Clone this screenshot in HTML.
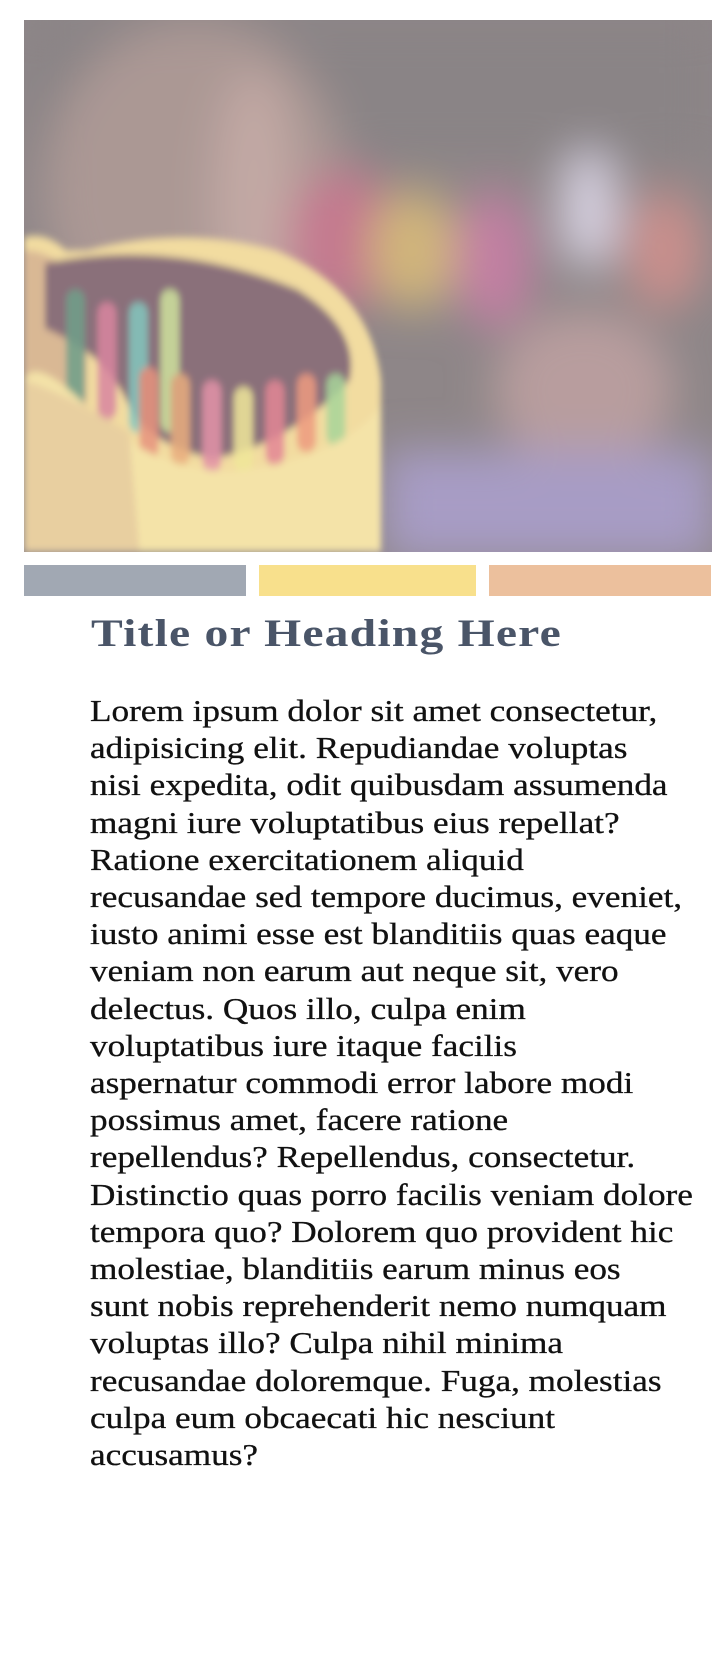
<!DOCTYPE html>
<html><head><meta charset="utf-8"><style>
html,body{margin:0;padding:0;background:#fff;width:726px;height:1668px;overflow:hidden}
.img{position:absolute;left:24px;top:20px;width:688px;height:532px;overflow:hidden}
.bar{position:absolute;top:565px;height:31px}
h1{position:absolute;left:91px;top:611px;margin:0;font:bold 39px/1.2 "Liberation Serif",serif;color:#4a5568;letter-spacing:1px;white-space:nowrap;transform:scaleX(1.22);transform-origin:0 0}
.p{position:absolute;left:90px;top:692px;margin:0;font:31px/37.2px "Liberation Serif",serif;color:#111;white-space:nowrap;transform:scaleX(1.135);transform-origin:0 0;-webkit-text-stroke:0.3px #111}
</style></head><body>
<div class="img"><svg width="688" height="532" viewBox="0 0 688 532">
<defs><filter id="b" x="-20%" y="-20%" width="140%" height="140%"><feGaussianBlur stdDeviation="22"/></filter>
<filter id="s"><feGaussianBlur stdDeviation="3"/></filter></defs>
<rect width="688" height="532" fill="#8e8688"/>
<g filter="url(#b)">
<rect x="0" y="0" width="688" height="140" fill="#8a8486"/>
<ellipse cx="170" cy="170" rx="150" ry="170" fill="#ab9894"/>
<ellipse cx="230" cy="180" rx="40" ry="130" fill="#c2a9a4"/>
<ellipse cx="320" cy="220" rx="55" ry="70" fill="#c4788f"/>
<ellipse cx="390" cy="230" rx="45" ry="60" fill="#d0b57a"/>
<ellipse cx="470" cy="240" rx="40" ry="70" fill="#c27fa3"/>
<ellipse cx="565" cy="190" rx="30" ry="60" fill="#d6d0e0"/>
<ellipse cx="640" cy="230" rx="40" ry="60" fill="#c98f8c"/>
<ellipse cx="560" cy="370" rx="90" ry="80" fill="#b89d9e"/>
<rect x="360" y="430" width="330" height="110" fill="#a79cc5"/>
</g>
<g filter="url(#s)" transform="translate(0,532) scale(1.05,1.3) translate(0,-532)">
<path d="M0 290 Q20 285 40 300 L60 300 Q150 280 240 300 Q330 330 340 400 L340 532 L0 532 Z" fill="#f2dca0"/>
<path d="M0 300 Q30 300 60 330 L60 532 L0 532Z" fill="#d9b894"/>
<path d="M20 310 Q140 290 260 330 Q320 360 310 400 Q250 450 180 460 Q120 450 100 420 Q80 380 20 360Z" fill="#8a6f7a"/>
<g opacity=".85">
<rect x="40" y="330" width="18" height="90" rx="8" fill="#6fa08a"/>
<rect x="70" y="340" width="18" height="90" rx="8" fill="#d986a0"/>
<rect x="100" y="340" width="18" height="100" rx="8" fill="#84c8bf"/>
<rect x="130" y="330" width="18" height="110" rx="8" fill="#cfe39e"/>
<rect x="110" y="390" width="18" height="70" rx="8" fill="#e7947e"/>
<rect x="140" y="395" width="18" height="70" rx="8" fill="#e9ae7e"/>
<rect x="170" y="400" width="18" height="70" rx="8" fill="#e393a8"/>
<rect x="200" y="405" width="18" height="65" rx="8" fill="#f0e79a"/>
<rect x="230" y="400" width="18" height="65" rx="8" fill="#e38796"/>
<rect x="260" y="395" width="18" height="60" rx="8" fill="#ee9b80"/>
<rect x="288" y="395" width="18" height="55" rx="8" fill="#a8d69a"/>
</g>
<path d="M0 400 Q10 380 60 420 Q120 470 200 470 Q300 460 340 420 L340 532 L0 532Z" fill="#f4e3a8"/>
<path d="M0 400 Q40 410 100 440 L110 532 L0 532Z" fill="#e8cfa0"/>
</g>
</svg></div>
<div class="bar" style="left:24px;width:222px;background:#a1a8b3"></div>
<div class="bar" style="left:259px;width:217px;background:#f8e08c"></div>
<div class="bar" style="left:489px;width:222px;background:#ecc09d"></div>
<h1>Title or Heading Here</h1>
<div class="p">Lorem ipsum dolor sit amet consectetur,<br>adipisicing elit. Repudiandae voluptas<br>nisi expedita, odit quibusdam assumenda<br>magni iure voluptatibus eius repellat?<br>Ratione exercitationem aliquid<br>recusandae sed tempore ducimus, eveniet,<br>iusto animi esse est blanditiis quas eaque<br>veniam non earum aut neque sit, vero<br>delectus. Quos illo, culpa enim<br>voluptatibus iure itaque facilis<br>aspernatur commodi error labore modi<br>possimus amet, facere ratione<br>repellendus? Repellendus, consectetur.<br>Distinctio quas porro facilis veniam dolore<br>tempora quo? Dolorem quo provident hic<br>molestiae, blanditiis earum minus eos<br>sunt nobis reprehenderit nemo numquam<br>voluptas illo? Culpa nihil minima<br>recusandae doloremque. Fuga, molestias<br>culpa eum obcaecati hic nesciunt<br>accusamus?</div>
</body></html>
